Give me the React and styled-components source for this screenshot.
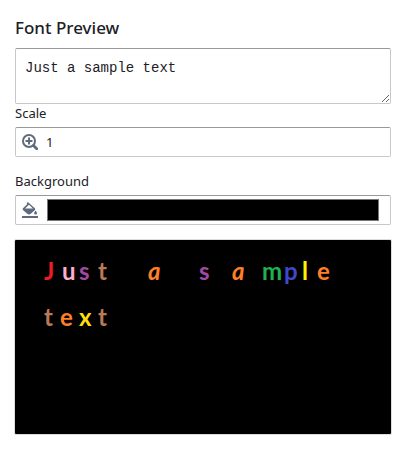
import React from 'react';
import styled, { createGlobalStyle } from 'styled-components';

const GlobalStyle = createGlobalStyle`
  *, *::before, *::after { box-sizing: border-box; }
  body {
    margin: 0;
    background: #fff;
    color: #1c2127;
    font-family: "Noto Sans", "Open Sans", sans-serif;
    font-size: 13px;
    line-height: 18px;
  }
`;

const Panel = styled.main`
  display: flex;
  flex-direction: column;
  padding: 16px 12px 16px 15px;
`;

const Title = styled.h1`
  margin: 0 0 8px;
  font-size: 17px;
  font-weight: 500;
  line-height: 24px;
`;

const SampleInput = styled.textarea`
  display: block;
  width: 100%;
  height: 56px;
  padding: 10px 9px;
  border: 1px solid #c8c8c8;
  border-top-color: #999;
  border-radius: 2px;
  outline: none;
  background: #fff;
  color: #1c2127;
  font: 14px/18px "Liberation Mono", monospace;
  resize: vertical;
`;

const Field = styled.div`
  display: flex;
  flex-direction: column;
  gap: 5px;
  margin-bottom: 15px;
`;

const Label = styled.label`
  height: 18px;
`;

const InputGroup = styled.div`
  display: flex;
  align-items: center;
  gap: 8px;
  height: 30px;
  padding: 0 11px 0 6px;
  border: 1px solid #c8c8c8;
  border-top-color: #999;
  border-radius: 2px;
`;

const Icon = styled.svg`
  flex: none;
  width: 16px;
  height: 16px;
  color: #5f6b7c;
`;

const NumberInput = styled.input`
  flex: 1;
  min-width: 0;
  height: 28px;
  padding: 0;
  border: 0;
  outline: none;
  background: transparent;
  color: inherit;
  font: inherit;
`;

const ColorInput = styled.input`
  flex: 1;
  min-width: 0;
  height: 22px;
  margin-left: 1px;
  padding: 0;
  border: 0;
  background: none;

  &::-webkit-color-swatch-wrapper { padding: 0; }
  &::-webkit-color-swatch { border: 1px solid #777; border-radius: 0; }
`;

const Preview = styled.section`
  min-height: 194px;
  padding: 8px 16px 8px 29px;
  border-radius: 1px;
  background: #000;
  box-shadow: 0 0 0 1px #ddd;
`;

const Line = styled.p`
  display: flex;
  margin: 0;
  height: 46px;
  white-space: pre;
  font: 700 24px/46px Lato, sans-serif;
`;

const Letter = styled.span`
  flex: none;
  width: ${({ $advance }) => $advance}px;
  color: ${({ $color }) => $color};
  font-style: ${({ $slanted }) => ($slanted ? 'italic' : 'normal')};
`;

const lines = [
  [
    ['J', '#ed1c24', 18], ['u', '#ffaec9', 17], ['s', '#a349a4', 19], ['t', '#b97a57', 16],
    [' ', '#fff', 34], ['a', '#ff7f27', 17], [' ', '#fff', 34],
    ['s', '#a349a4', 33], ['a', '#ff7f27', 30], ['m', '#22b14c', 22],
    ['p', '#3f48cc', 18], ['l', '#fff200', 15], ['e', '#ff7f27', 16],
  ],
  [['t', '#b97a57', 16], ['e', '#ff7f27', 19], ['x', '#ffdd0e', 19], ['t', '#b97a57', 16]],
];

function ZoomInIcon() {
  return (
    <Icon viewBox="0 0 16 16" aria-hidden="true" fill="none" stroke="currentColor" strokeWidth="2">
      <circle cx="7" cy="7" r="6" />
      <path d="M7 3.5v7M3.5 7h7" />
      <path d="M11.5 11.5l3.2 3.2" strokeWidth="2.8" strokeLinecap="round" />
    </Icon>
  );
}

function FillIcon() {
  return (
    <Icon viewBox="0 0 16 16" aria-hidden="true" fill="currentColor">
      <path fillRule="evenodd" d="M5.8 0l6.8 6.1c.8.8.8 1.5.1 2.2l-3.9 3.5c-1.1 1-2.4 1-3.5 0L1.2 8.3c-.7-.7-.7-1.4 0-2.2L5.4 2 4.6 1.2zM7 2.8L3 6.6h8z" />
      <path d="M13.6 8.6c.8 1 1.4 1.8 1.4 2.6a1.4 1.4 0 0 1-2.8 0c0-.8.6-1.6 1.4-2.6z" />
      <path d="M0 14h16v2H0z" />
    </Icon>
  );
}

export default function App() {
  return (
    <>
      <GlobalStyle />
      <Panel>
        <Title id="preview-title">Font Preview</Title>
        <SampleInput aria-labelledby="preview-title" defaultValue="Just a sample text" spellCheck={false} />
        <Field>
          <Label htmlFor="scale">Scale</Label>
          <InputGroup>
            <ZoomInIcon />
            <NumberInput id="scale" inputMode="numeric" defaultValue="1" />
          </InputGroup>
        </Field>
        <Field>
          <Label htmlFor="background">Background</Label>
          <InputGroup>
            <FillIcon />
            <ColorInput id="background" type="color" defaultValue="#000000" />
          </InputGroup>
        </Field>
        <Preview aria-labelledby="preview-title">
          {lines.map((letters, row) => (
            <Line key={row}>
              {letters.map(([char, color, advance], i) => (
                <Letter key={i} $color={color} $advance={advance} $slanted={char === 'a'}>{char}</Letter>
              ))}
            </Line>
          ))}
        </Preview>
      </Panel>
    </>
  );
}
